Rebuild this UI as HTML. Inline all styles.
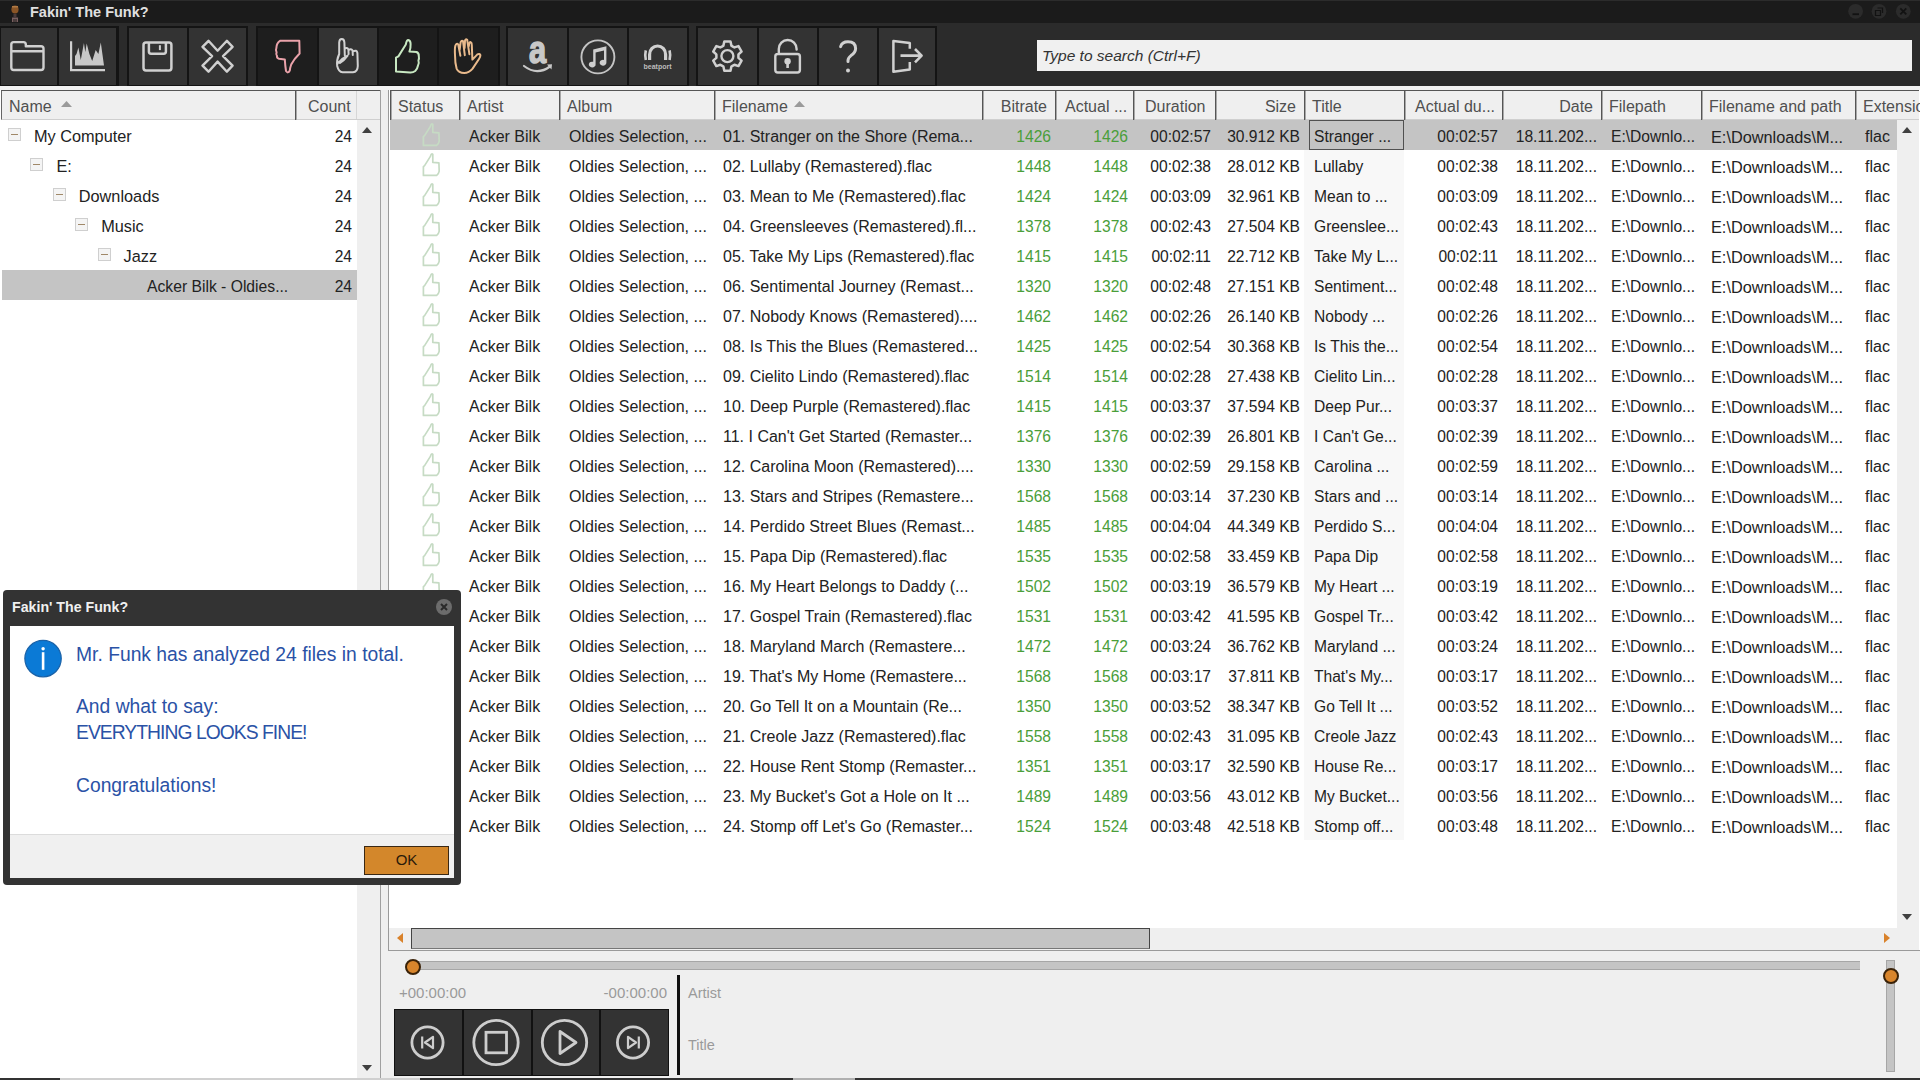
<!DOCTYPE html><html><head><meta charset="utf-8"><style>
*{margin:0;padding:0;box-sizing:border-box}
html,body{width:1920px;height:1080px;overflow:hidden;background:#efefef;font-family:"Liberation Sans",sans-serif;position:relative}
.a{position:absolute}
.t{position:absolute;white-space:pre;line-height:30px;font-size:16px;color:#222;padding-top:1.5px}
.h{position:absolute;white-space:pre;line-height:29px;font-size:16px;color:#505050;padding-top:1px}
.r{text-align:right}
.n{transform:scaleX(0.975);transform-origin:100% 50%}
.g{color:#4a9e3a}
</style></head><body><div class="a" style="left:0;top:0;width:1920px;height:26px;background:#1b1b1b"></div>
<div class="a" style="left:0;top:0;width:1920px;height:1px;background:#2c2c2c"></div>
<svg class="a" style="left:8px;top:3px" width="14" height="20" viewBox="0 0 14 20"><ellipse cx="7" cy="6.5" rx="3.6" ry="4" fill="#8a5526"/><rect x="4" y="3" width="6" height="1.5" fill="#b07a45"/><rect x="5.5" y="11" width="3" height="3" fill="#4a3a3a"/><path d="M4 14.5h6v4.5h-1.5v-3h-1v3h-1v-3h-1v3h-1.5z" fill="#7a6060"/></svg>
<div class="a" style="left:30px;top:3px;font-size:14.5px;font-weight:bold;color:#e0e0e0;white-space:pre;line-height:18px">Fakin' The Funk?</div>
<svg class="a" style="left:1840px;top:0" width="80" height="24" viewBox="1840 0 80 24"><circle cx="1855.6" cy="11.3" r="7.4" fill="#2b2b2b"/><circle cx="1879" cy="11.3" r="7.4" fill="#2b2b2b"/><circle cx="1903.3" cy="11.3" r="7.4" fill="#2b2b2b"/><path d="M1852.5 14.2h6.5" stroke="#121212" stroke-width="1.8"/><path d="M1875.5 10.5h5v5h-5z M1877.5 8h5v5" fill="none" stroke="#121212" stroke-width="1.2"/><path d="M1900.3 8.3l6 6M1906.3 8.3l-6 6" stroke="#121212" stroke-width="1.8"/></svg>
<div class="a" style="left:0;top:23px;width:1920px;height:63px;background:#2b2b2b"></div>
<div class="a" style="left:0px;top:26px;width:119px;height:60px;background:#141414"></div>
<div class="a" style="left:127px;top:26px;width:121px;height:60px;background:#141414"></div>
<div class="a" style="left:256px;top:26px;width:244px;height:60px;background:#141414"></div>
<div class="a" style="left:506px;top:26px;width:183px;height:60px;background:#141414"></div>
<div class="a" style="left:696px;top:26px;width:241px;height:60px;background:#141414"></div>
<div class="a" style="left:1px;top:28px;width:56px;height:57px;background:#333"></div>
<div class="a" style="left:59px;top:28px;width:57px;height:57px;background:#333"></div>
<div class="a" style="left:129px;top:28px;width:58px;height:57px;background:#333"></div>
<div class="a" style="left:189px;top:28px;width:57px;height:57px;background:#333"></div>
<div class="a" style="left:258px;top:28px;width:59px;height:57px;background:#1e1e1e"></div>
<div class="a" style="left:319px;top:28px;width:58px;height:57px;background:#333"></div>
<div class="a" style="left:379px;top:28px;width:58px;height:57px;background:#1e1e1e"></div>
<div class="a" style="left:439px;top:28px;width:59px;height:57px;background:#1e1e1e"></div>
<div class="a" style="left:508px;top:28px;width:59px;height:57px;background:#333"></div>
<div class="a" style="left:569px;top:28px;width:58px;height:57px;background:#333"></div>
<div class="a" style="left:629px;top:28px;width:58px;height:57px;background:#333"></div>
<div class="a" style="left:698px;top:28px;width:59px;height:57px;background:#333"></div>
<div class="a" style="left:759px;top:28px;width:58px;height:57px;background:#333"></div>
<div class="a" style="left:819px;top:28px;width:58px;height:57px;background:#333"></div>
<div class="a" style="left:879px;top:28px;width:56px;height:57px;background:#333"></div>
<svg class="a" style="left:0;top:0" width="960" height="90" viewBox="0 0 960 90"><path fill="none" stroke="#d0d0d0" stroke-width="2.4" stroke-linejoin="round" d="M11.3 44.5 Q11.3 42.1 13.7 42.1 L23.5 42.1 Q25.8 42.1 25.8 44.5 L25.8 46.2 L41 46.2 Q43.5 46.2 43.5 48.6 L43.5 67.6 Q43.5 70 41 70 L13.7 70 Q11.3 70 11.3 67.6 Z M11.3 51.3 H43.5"/><path fill="none" stroke="#d0d0d0" stroke-width="2.2" d="M71.1 41.3 V70.1 H105"/><path fill="#c8c8c8" d="M75 65.6 L75 56 L76.5 54 L78.4 47.5 L80.8 60 L83.9 43 L85.3 52 L86.7 43.4 L89.4 54 L92.2 61 L95.7 50 L98.4 54 L100.8 42.6 L102.4 54 L104 65.6 Z"/><path fill="none" stroke="#d0d0d0" stroke-width="2.5" stroke-linejoin="round" d="M146 42.5 L169 42.5 Q171.4 42.5 171.4 45 L171.4 68 Q171.4 70.4 169 70.4 L146 70.4 Q143.5 70.4 143.5 68 L143.5 45 Q143.5 42.5 146 42.5 Z M148.9 42.5 V51.5 Q148.9 53.7 151 53.7 H163.8 Q165.9 53.7 165.9 51.5 V42.5"/><path stroke="#d0d0d0" stroke-width="2" d="M159.9 45.2 V50.1"/><path fill="none" stroke="#d0d0d0" stroke-width="2.4" stroke-linejoin="round" d="M208.5 40.8 L217.6 50.7 L226.9 40.8 L232.6 46.8 L223 56.1 L232.6 65.7 L226.9 71.7 L217.6 61.6 L208.5 71.7 L202.5 65.7 L212.1 56.1 L202.5 46.8 Z"/><path fill="none" stroke="#eaa2aa" stroke-width="2" stroke-linejoin="round" stroke-linecap="round" d="M280 40.8 L299.3 40.8 L299.6 53.5 Q294 59 291.2 64.5 Q290 68 289.8 70.5 Q288 74 286 71 Q285.2 66 284.8 59.4 L279 58.8 Q276.6 58 277 56 Q275.6 54.5 276.6 52.5 Q275.4 50 276.4 47.8 Q276.5 43 280 40.8 Z"/><path fill="none" stroke="#d2d2d2" stroke-width="2" stroke-linejoin="round" stroke-linecap="round" d="M339.2 54 L339.2 42.5 Q339.4 39 341.8 39 Q344.2 39 344.4 42.5 L344.8 55.5 M344.6 49 Q347 46.8 348.4 49.5 L348.6 54 M348.6 50 Q351 48 352.6 50.6 L352.8 55 M352.8 51.5 Q356.8 49.2 357.4 53 L357.8 66 Q357.6 72 353 72.2 L342.5 72.2 Q338.6 72 337.2 66 Q336.4 60 339.2 54 M338.2 63 Q342 58 347.6 55.6 Q344 60.5 340 63"/><path fill="none" stroke="#c8e8c2" stroke-width="2" stroke-linejoin="round" stroke-linecap="round" d="M396 71.6 L396 57.6 L398.4 56.4 L405.8 44.5 Q406.6 40 408.2 40 Q410.6 40.4 410.6 44 Q410.8 48 409.4 51.6 L416.6 52 Q419 53.2 418.8 56 Q419.4 59 418.4 60.5 Q419.4 63 418 65.5 Q417.4 69 415.2 71 Q413 72.6 410 72.4 Z"/><path fill="none" stroke="#e9ba8c" stroke-width="2" stroke-linejoin="round" stroke-linecap="round" d="M455 55 Q454.6 48 455.4 45.6 Q456.6 42.8 458.2 44.4 L460.4 55.8 M459.6 50 L460.6 42.4 Q461.6 40 463 41 L464.8 55.2 M464.6 48 L465 40.8 Q465.6 38.6 467.2 39.8 L469.4 54.2 M468.8 46 Q469.4 41.6 470.6 42.2 Q472 43 471.8 45 L472.4 59.6 L477.4 54.4 Q479.6 53.2 480.4 55.2 Q480.4 57 479 59 L472.6 68.6 Q469 73 464.2 73 Q458.6 73 456.6 68.6 Q455 63 455 55"/><text x="0" y="0" transform="translate(537.6 63.2) scale(1.1 1.36)" font-family="Liberation Sans" font-weight="bold" font-size="28" fill="#c8c8c8" stroke="#c8c8c8" stroke-width="1.1" text-anchor="middle">a</text><path fill="none" stroke="#c8c8c8" stroke-width="2.2" stroke-linecap="round" d="M524 66 Q537 76 550 66.5"/><path fill="#c8c8c8" d="M547 64.4 L552 64.2 L551.5 69.6 Z"/><circle cx="597.9" cy="56.9" r="16.5" fill="none" stroke="#c4c4c4" stroke-width="1.9"/><path fill="#cfcfcf" d="M593.2 49.6 L606.4 46.2 L606.4 62.6 A3.4 2.9 0 1 1 604 60 L604 50.6 L595.6 52.6 L595.6 64.4 A3.4 2.9 0 1 1 593.2 61.8 Z"/><path fill="none" stroke="#cfcfcf" stroke-width="3.2" d="M649.6 60 V54.4 A8 8.4 0 0 1 665.6 54.4 V60"/><path fill="none" stroke="#cfcfcf" stroke-width="2.6" d="M645.8 50.4 Q644.6 55.2 645.8 60 M669.6 50.4 Q670.8 55.2 669.6 60"/><text x="657.5" y="69.2" font-family="Liberation Sans" font-size="8" font-weight="bold" fill="#bdbdbd" text-anchor="middle" textLength="28" lengthAdjust="spacingAndGlyphs">beatport</text><polygon points="721.90,46.57 723.39,45.64 724.30,41.53 730.50,41.53 731.41,45.64 732.90,46.57 734.45,47.40 738.47,46.13 741.57,51.50 738.46,54.35 738.40,56.10 738.46,57.85 741.57,60.70 738.47,66.07 734.45,64.80 732.90,65.63 731.41,66.56 730.50,70.67 724.30,70.67 723.39,66.56 721.90,65.63 720.35,64.80 716.33,66.07 713.23,60.70 716.34,57.85 716.40,56.10 716.34,54.35 713.23,51.50 716.33,46.13 720.35,47.40" fill="none" stroke="#d0d0d0" stroke-width="2.5" stroke-linejoin="round"/><circle cx="727.4" cy="56.1" r="6" fill="none" stroke="#d0d0d0" stroke-width="2.4"/><path fill="none" stroke="#d0d0d0" stroke-width="2.4" stroke-linejoin="round" stroke-linecap="round" d="M778.8 54 V48.9 A8.9 8.9 0 0 1 796.6 48.9 V49.6 M777.8 54 H797.4 Q799.9 54 799.9 56.5 V70 Q799.9 72.5 797.4 72.5 H777.8 Q775.3 72.5 775.3 70 V56.5 Q775.3 54 777.8 54 Z"/><circle cx="787.6" cy="61.3" r="3.2" fill="#d0d0d0"/><rect x="786.3" y="61.5" width="2.6" height="6.5" fill="#d0d0d0"/><path fill="none" stroke="#d0d0d0" stroke-width="3" stroke-linecap="round" stroke-linejoin="round" d="M840.6 46.6 Q842 41.8 848 41.8 Q855.6 41.8 855.6 48.6 Q855.6 52.6 851 55.6 Q848 57.8 848 60.6 V61.6"/><circle cx="848" cy="70.4" r="2" fill="#d0d0d0"/><path fill="none" stroke="#d0d0d0" stroke-width="2.5" stroke-linejoin="round" d="M909.8 48.8 V43 L893.4 41 V71.7 L909.8 69.5 V61.9"/><path fill="none" stroke="#d0d0d0" stroke-width="2.6" stroke-linejoin="round" d="M900.5 55.6 H921 M915 49 L921.6 55.6 L915 62.4"/></svg>
<div class="a" style="left:1037px;top:40px;width:875px;height:31px;background:#f0f0f0"></div>
<div class="a" style="left:1042px;top:40px;line-height:31px;font-size:15.5px;font-style:italic;color:#333;white-space:pre">Type to search (Ctrl+F)</div>
<div class="a" style="left:0;top:86px;width:1920px;height:4px;background:#f2f2f2"></div>
<div class="a" style="left:0;top:90px;width:380px;height:988px;background:#fff"></div>
<div class="a" style="left:1px;top:90px;width:379px;height:30px;background:#efefef;border-top:1px solid #555;border-left:1px solid #666;border-bottom:1px solid #cfcfcf"></div>
<div class="a" style="left:295px;top:91px;width:1px;height:29px;background:#555"></div><div class="a" style="left:296px;top:91px;width:1px;height:29px;background:#a8a8a8"></div>
<div class="h" style="left:9px;top:91px">Name</div>
<svg class="a" style="left:60px;top:100px" width="13" height="8"><path d="M1 7 L6.5 1 L12 7Z" fill="#9a9a9a"/></svg>
<div class="h" style="left:308px;top:91px">Count</div>
<div class="a" style="left:357px;top:120px;width:23px;height:958px;background:#efefef"></div>
<div class="a" style="left:356px;top:91px;width:1px;height:28px;background:#d6d6d6"></div>
<svg class="a" style="left:361px;top:126px" width="12" height="8"><path d="M1 7 L6 1 L11 7Z" fill="#404040"/></svg>
<svg class="a" style="left:361px;top:1064px" width="12" height="8"><path d="M1 1 L6 7 L11 1Z" fill="#404040"/></svg>
<div class="a" style="left:8.0px;top:128px;width:13px;height:13px;border:1px solid #cfcfcf;background:#f4f4f4"></div>
<div class="a" style="left:11.0px;top:134px;width:7px;height:1px;background:#a08868"></div>
<div class="t" style="left:34.0px;top:119px;font-size:16.3px">My Computer</div>
<div class="t r n" style="left:300px;width:52px;top:120px">24</div>
<div class="a" style="left:30.4px;top:158px;width:13px;height:13px;border:1px solid #cfcfcf;background:#f4f4f4"></div>
<div class="a" style="left:33.4px;top:164px;width:7px;height:1px;background:#a08868"></div>
<div class="t" style="left:56.4px;top:149px;font-size:16.3px">E:</div>
<div class="t r n" style="left:300px;width:52px;top:150px">24</div>
<div class="a" style="left:52.8px;top:188px;width:13px;height:13px;border:1px solid #cfcfcf;background:#f4f4f4"></div>
<div class="a" style="left:55.8px;top:194px;width:7px;height:1px;background:#a08868"></div>
<div class="t" style="left:78.8px;top:179px;font-size:16.3px">Downloads</div>
<div class="t r n" style="left:300px;width:52px;top:180px">24</div>
<div class="a" style="left:75.2px;top:218px;width:13px;height:13px;border:1px solid #cfcfcf;background:#f4f4f4"></div>
<div class="a" style="left:78.2px;top:224px;width:7px;height:1px;background:#a08868"></div>
<div class="t" style="left:101.2px;top:209px;font-size:16.3px">Music</div>
<div class="t r n" style="left:300px;width:52px;top:210px">24</div>
<div class="a" style="left:97.6px;top:248px;width:13px;height:13px;border:1px solid #cfcfcf;background:#f4f4f4"></div>
<div class="a" style="left:100.6px;top:254px;width:7px;height:1px;background:#a08868"></div>
<div class="t" style="left:123.6px;top:239px;font-size:16.3px">Jazz</div>
<div class="t r n" style="left:300px;width:52px;top:240px">24</div>
<div class="a" style="left:2px;top:270px;width:355px;height:30px;background:#c4c4c4"></div>
<div class="t" style="left:147px;top:270px;font-size:15.7px">Acker Bilk - Oldies...</div>
<div class="t r n" style="left:300px;width:52px;top:270px">24</div>
<div class="a" style="left:380px;top:90px;width:8px;height:988px;background:#efefef;border-left:1px solid #a0a0a0"></div>
<div class="a" style="left:388px;top:90px;width:1532px;height:861px;background:#fff;border-left:1px solid #9a9a9a;border-bottom:1px solid #9a9a9a"></div>
<div class="a" style="left:390px;top:90px;width:1529px;height:30px;background:#efefef;border-top:1px solid #555;border-bottom:1px solid #cfcfcf"></div>
<div class="a" style="left:390px;top:91px;width:1px;height:29px;background:#555"></div><div class="a" style="left:391px;top:91px;width:1px;height:29px;background:#a8a8a8"></div>
<div class="a" style="left:459px;top:91px;width:1px;height:29px;background:#555"></div><div class="a" style="left:460px;top:91px;width:1px;height:29px;background:#a8a8a8"></div>
<div class="a" style="left:559px;top:91px;width:1px;height:29px;background:#555"></div><div class="a" style="left:560px;top:91px;width:1px;height:29px;background:#a8a8a8"></div>
<div class="a" style="left:714px;top:91px;width:1px;height:29px;background:#555"></div><div class="a" style="left:715px;top:91px;width:1px;height:29px;background:#a8a8a8"></div>
<div class="a" style="left:982px;top:91px;width:1px;height:29px;background:#555"></div><div class="a" style="left:983px;top:91px;width:1px;height:29px;background:#a8a8a8"></div>
<div class="a" style="left:1055px;top:91px;width:1px;height:29px;background:#555"></div><div class="a" style="left:1056px;top:91px;width:1px;height:29px;background:#a8a8a8"></div>
<div class="a" style="left:1133px;top:91px;width:1px;height:29px;background:#555"></div><div class="a" style="left:1134px;top:91px;width:1px;height:29px;background:#a8a8a8"></div>
<div class="a" style="left:1215px;top:91px;width:1px;height:29px;background:#555"></div><div class="a" style="left:1216px;top:91px;width:1px;height:29px;background:#a8a8a8"></div>
<div class="a" style="left:1304px;top:91px;width:1px;height:29px;background:#555"></div><div class="a" style="left:1305px;top:91px;width:1px;height:29px;background:#a8a8a8"></div>
<div class="a" style="left:1404px;top:91px;width:1px;height:29px;background:#555"></div><div class="a" style="left:1405px;top:91px;width:1px;height:29px;background:#a8a8a8"></div>
<div class="a" style="left:1502px;top:91px;width:1px;height:29px;background:#555"></div><div class="a" style="left:1503px;top:91px;width:1px;height:29px;background:#a8a8a8"></div>
<div class="a" style="left:1601px;top:91px;width:1px;height:29px;background:#555"></div><div class="a" style="left:1602px;top:91px;width:1px;height:29px;background:#a8a8a8"></div>
<div class="a" style="left:1701px;top:91px;width:1px;height:29px;background:#555"></div><div class="a" style="left:1702px;top:91px;width:1px;height:29px;background:#a8a8a8"></div>
<div class="a" style="left:1855px;top:91px;width:1px;height:29px;background:#555"></div><div class="a" style="left:1856px;top:91px;width:1px;height:29px;background:#a8a8a8"></div>
<div class="a" style="left:1304px;top:150px;width:100px;height:690px;background:#f8f8f8"></div>
<div class="h" style="left:398px;top:91px">Status</div>
<div class="h" style="left:467px;top:91px">Artist</div>
<div class="h" style="left:567px;top:91px">Album</div>
<div class="h" style="left:722px;top:91px">Filename</div>
<div class="h r" style="left:897px;width:150px;top:91px">Bitrate</div>
<div class="h" style="left:1065px;top:91px">Actual ...</div>
<div class="h" style="left:1145px;top:91px">Duration</div>
<div class="h r" style="left:1146px;width:150px;top:91px">Size</div>
<div class="h" style="left:1312px;top:91px">Title</div>
<div class="h" style="left:1415px;top:91px">Actual du...</div>
<div class="h r" style="left:1443px;width:150px;top:91px">Date</div>
<div class="h" style="left:1609px;top:91px">Filepath</div>
<div class="h" style="left:1709px;top:91px">Filename and path</div>
<div class="h" style="left:1863px;top:91px">Extensio</div>
<svg class="a" style="left:793px;top:100px" width="13" height="8"><path d="M1 7 L6.5 1 L12 7Z" fill="#9a9a9a"/></svg>
<div class="a" style="left:390px;top:120px;width:1507px;height:30px;background:#c4c4c4"></div>
<div class="a" style="left:1309px;top:120px;width:95px;height:30px;border:1px solid #505050"></div>
<svg class="a" style="left:421px;top:122px" width="20" height="26" viewBox="0 0 20 26"><path fill="none" stroke="#c6dbc4" stroke-width="1.7" stroke-linejoin="round" d="M2.4 23.4 V14.6 L3.6 13.6 L9.4 4.4 Q10.4 1 11.8 2.4 L11.8 10.4 L17.9 10.8 L18.2 19.2 Q17.6 22.4 15.6 23.4 Z"/></svg>
<div class="t" style="left:469px;top:120px">Acker Bilk</div>
<div class="t" style="left:569px;top:120px">Oldies Selection, ...</div>
<div class="t" style="left:723px;top:120px">01. Stranger on the Shore (Rema...</div>
<div class="t r g n" style="left:951px;width:100px;top:120px">1426</div>
<div class="t r g n" style="left:1028px;width:100px;top:120px">1426</div>
<div class="t r n" style="left:1110.5px;width:100px;top:120px">00:02:57</div>
<div class="t r n" style="left:1199.5px;width:100px;top:120px">30.912 KB</div>
<div class="t" style="left:1314px;top:120px;font-size:15.6px">Stranger ...</div>
<div class="t r n" style="left:1397.5px;width:100px;top:120px">00:02:57</div>
<div class="t r n" style="left:1497px;width:100px;top:120px">18.11.202...</div>
<div class="t" style="left:1611px;top:120px;font-size:15.6px">E:\Downlo...</div>
<div class="t" style="left:1711px;top:120px;font-size:16.3px">E:\Downloads\M...</div>
<div class="t" style="left:1865px;top:120px">flac</div>
<svg class="a" style="left:421px;top:152px" width="20" height="26" viewBox="0 0 20 26"><path fill="none" stroke="#c6dbc4" stroke-width="1.7" stroke-linejoin="round" d="M2.4 23.4 V14.6 L3.6 13.6 L9.4 4.4 Q10.4 1 11.8 2.4 L11.8 10.4 L17.9 10.8 L18.2 19.2 Q17.6 22.4 15.6 23.4 Z"/></svg>
<div class="t" style="left:469px;top:150px">Acker Bilk</div>
<div class="t" style="left:569px;top:150px">Oldies Selection, ...</div>
<div class="t" style="left:723px;top:150px">02. Lullaby (Remastered).flac</div>
<div class="t r g n" style="left:951px;width:100px;top:150px">1448</div>
<div class="t r g n" style="left:1028px;width:100px;top:150px">1448</div>
<div class="t r n" style="left:1110.5px;width:100px;top:150px">00:02:38</div>
<div class="t r n" style="left:1199.5px;width:100px;top:150px">28.012 KB</div>
<div class="t" style="left:1314px;top:150px;font-size:15.6px">Lullaby</div>
<div class="t r n" style="left:1397.5px;width:100px;top:150px">00:02:38</div>
<div class="t r n" style="left:1497px;width:100px;top:150px">18.11.202...</div>
<div class="t" style="left:1611px;top:150px;font-size:15.6px">E:\Downlo...</div>
<div class="t" style="left:1711px;top:150px;font-size:16.3px">E:\Downloads\M...</div>
<div class="t" style="left:1865px;top:150px">flac</div>
<svg class="a" style="left:421px;top:182px" width="20" height="26" viewBox="0 0 20 26"><path fill="none" stroke="#c6dbc4" stroke-width="1.7" stroke-linejoin="round" d="M2.4 23.4 V14.6 L3.6 13.6 L9.4 4.4 Q10.4 1 11.8 2.4 L11.8 10.4 L17.9 10.8 L18.2 19.2 Q17.6 22.4 15.6 23.4 Z"/></svg>
<div class="t" style="left:469px;top:180px">Acker Bilk</div>
<div class="t" style="left:569px;top:180px">Oldies Selection, ...</div>
<div class="t" style="left:723px;top:180px">03. Mean to Me (Remastered).flac</div>
<div class="t r g n" style="left:951px;width:100px;top:180px">1424</div>
<div class="t r g n" style="left:1028px;width:100px;top:180px">1424</div>
<div class="t r n" style="left:1110.5px;width:100px;top:180px">00:03:09</div>
<div class="t r n" style="left:1199.5px;width:100px;top:180px">32.961 KB</div>
<div class="t" style="left:1314px;top:180px;font-size:15.6px">Mean to ...</div>
<div class="t r n" style="left:1397.5px;width:100px;top:180px">00:03:09</div>
<div class="t r n" style="left:1497px;width:100px;top:180px">18.11.202...</div>
<div class="t" style="left:1611px;top:180px;font-size:15.6px">E:\Downlo...</div>
<div class="t" style="left:1711px;top:180px;font-size:16.3px">E:\Downloads\M...</div>
<div class="t" style="left:1865px;top:180px">flac</div>
<svg class="a" style="left:421px;top:212px" width="20" height="26" viewBox="0 0 20 26"><path fill="none" stroke="#c6dbc4" stroke-width="1.7" stroke-linejoin="round" d="M2.4 23.4 V14.6 L3.6 13.6 L9.4 4.4 Q10.4 1 11.8 2.4 L11.8 10.4 L17.9 10.8 L18.2 19.2 Q17.6 22.4 15.6 23.4 Z"/></svg>
<div class="t" style="left:469px;top:210px">Acker Bilk</div>
<div class="t" style="left:569px;top:210px">Oldies Selection, ...</div>
<div class="t" style="left:723px;top:210px">04. Greensleeves (Remastered).fl...</div>
<div class="t r g n" style="left:951px;width:100px;top:210px">1378</div>
<div class="t r g n" style="left:1028px;width:100px;top:210px">1378</div>
<div class="t r n" style="left:1110.5px;width:100px;top:210px">00:02:43</div>
<div class="t r n" style="left:1199.5px;width:100px;top:210px">27.504 KB</div>
<div class="t" style="left:1314px;top:210px;font-size:15.6px">Greenslee...</div>
<div class="t r n" style="left:1397.5px;width:100px;top:210px">00:02:43</div>
<div class="t r n" style="left:1497px;width:100px;top:210px">18.11.202...</div>
<div class="t" style="left:1611px;top:210px;font-size:15.6px">E:\Downlo...</div>
<div class="t" style="left:1711px;top:210px;font-size:16.3px">E:\Downloads\M...</div>
<div class="t" style="left:1865px;top:210px">flac</div>
<svg class="a" style="left:421px;top:242px" width="20" height="26" viewBox="0 0 20 26"><path fill="none" stroke="#c6dbc4" stroke-width="1.7" stroke-linejoin="round" d="M2.4 23.4 V14.6 L3.6 13.6 L9.4 4.4 Q10.4 1 11.8 2.4 L11.8 10.4 L17.9 10.8 L18.2 19.2 Q17.6 22.4 15.6 23.4 Z"/></svg>
<div class="t" style="left:469px;top:240px">Acker Bilk</div>
<div class="t" style="left:569px;top:240px">Oldies Selection, ...</div>
<div class="t" style="left:723px;top:240px">05. Take My Lips (Remastered).flac</div>
<div class="t r g n" style="left:951px;width:100px;top:240px">1415</div>
<div class="t r g n" style="left:1028px;width:100px;top:240px">1415</div>
<div class="t r n" style="left:1110.5px;width:100px;top:240px">00:02:11</div>
<div class="t r n" style="left:1199.5px;width:100px;top:240px">22.712 KB</div>
<div class="t" style="left:1314px;top:240px;font-size:15.6px">Take My L...</div>
<div class="t r n" style="left:1397.5px;width:100px;top:240px">00:02:11</div>
<div class="t r n" style="left:1497px;width:100px;top:240px">18.11.202...</div>
<div class="t" style="left:1611px;top:240px;font-size:15.6px">E:\Downlo...</div>
<div class="t" style="left:1711px;top:240px;font-size:16.3px">E:\Downloads\M...</div>
<div class="t" style="left:1865px;top:240px">flac</div>
<svg class="a" style="left:421px;top:272px" width="20" height="26" viewBox="0 0 20 26"><path fill="none" stroke="#c6dbc4" stroke-width="1.7" stroke-linejoin="round" d="M2.4 23.4 V14.6 L3.6 13.6 L9.4 4.4 Q10.4 1 11.8 2.4 L11.8 10.4 L17.9 10.8 L18.2 19.2 Q17.6 22.4 15.6 23.4 Z"/></svg>
<div class="t" style="left:469px;top:270px">Acker Bilk</div>
<div class="t" style="left:569px;top:270px">Oldies Selection, ...</div>
<div class="t" style="left:723px;top:270px">06. Sentimental Journey (Remast...</div>
<div class="t r g n" style="left:951px;width:100px;top:270px">1320</div>
<div class="t r g n" style="left:1028px;width:100px;top:270px">1320</div>
<div class="t r n" style="left:1110.5px;width:100px;top:270px">00:02:48</div>
<div class="t r n" style="left:1199.5px;width:100px;top:270px">27.151 KB</div>
<div class="t" style="left:1314px;top:270px;font-size:15.6px">Sentiment...</div>
<div class="t r n" style="left:1397.5px;width:100px;top:270px">00:02:48</div>
<div class="t r n" style="left:1497px;width:100px;top:270px">18.11.202...</div>
<div class="t" style="left:1611px;top:270px;font-size:15.6px">E:\Downlo...</div>
<div class="t" style="left:1711px;top:270px;font-size:16.3px">E:\Downloads\M...</div>
<div class="t" style="left:1865px;top:270px">flac</div>
<svg class="a" style="left:421px;top:302px" width="20" height="26" viewBox="0 0 20 26"><path fill="none" stroke="#c6dbc4" stroke-width="1.7" stroke-linejoin="round" d="M2.4 23.4 V14.6 L3.6 13.6 L9.4 4.4 Q10.4 1 11.8 2.4 L11.8 10.4 L17.9 10.8 L18.2 19.2 Q17.6 22.4 15.6 23.4 Z"/></svg>
<div class="t" style="left:469px;top:300px">Acker Bilk</div>
<div class="t" style="left:569px;top:300px">Oldies Selection, ...</div>
<div class="t" style="left:723px;top:300px">07. Nobody Knows (Remastered)....</div>
<div class="t r g n" style="left:951px;width:100px;top:300px">1462</div>
<div class="t r g n" style="left:1028px;width:100px;top:300px">1462</div>
<div class="t r n" style="left:1110.5px;width:100px;top:300px">00:02:26</div>
<div class="t r n" style="left:1199.5px;width:100px;top:300px">26.140 KB</div>
<div class="t" style="left:1314px;top:300px;font-size:15.6px">Nobody ...</div>
<div class="t r n" style="left:1397.5px;width:100px;top:300px">00:02:26</div>
<div class="t r n" style="left:1497px;width:100px;top:300px">18.11.202...</div>
<div class="t" style="left:1611px;top:300px;font-size:15.6px">E:\Downlo...</div>
<div class="t" style="left:1711px;top:300px;font-size:16.3px">E:\Downloads\M...</div>
<div class="t" style="left:1865px;top:300px">flac</div>
<svg class="a" style="left:421px;top:332px" width="20" height="26" viewBox="0 0 20 26"><path fill="none" stroke="#c6dbc4" stroke-width="1.7" stroke-linejoin="round" d="M2.4 23.4 V14.6 L3.6 13.6 L9.4 4.4 Q10.4 1 11.8 2.4 L11.8 10.4 L17.9 10.8 L18.2 19.2 Q17.6 22.4 15.6 23.4 Z"/></svg>
<div class="t" style="left:469px;top:330px">Acker Bilk</div>
<div class="t" style="left:569px;top:330px">Oldies Selection, ...</div>
<div class="t" style="left:723px;top:330px">08. Is This the Blues (Remastered...</div>
<div class="t r g n" style="left:951px;width:100px;top:330px">1425</div>
<div class="t r g n" style="left:1028px;width:100px;top:330px">1425</div>
<div class="t r n" style="left:1110.5px;width:100px;top:330px">00:02:54</div>
<div class="t r n" style="left:1199.5px;width:100px;top:330px">30.368 KB</div>
<div class="t" style="left:1314px;top:330px;font-size:15.6px">Is This the...</div>
<div class="t r n" style="left:1397.5px;width:100px;top:330px">00:02:54</div>
<div class="t r n" style="left:1497px;width:100px;top:330px">18.11.202...</div>
<div class="t" style="left:1611px;top:330px;font-size:15.6px">E:\Downlo...</div>
<div class="t" style="left:1711px;top:330px;font-size:16.3px">E:\Downloads\M...</div>
<div class="t" style="left:1865px;top:330px">flac</div>
<svg class="a" style="left:421px;top:362px" width="20" height="26" viewBox="0 0 20 26"><path fill="none" stroke="#c6dbc4" stroke-width="1.7" stroke-linejoin="round" d="M2.4 23.4 V14.6 L3.6 13.6 L9.4 4.4 Q10.4 1 11.8 2.4 L11.8 10.4 L17.9 10.8 L18.2 19.2 Q17.6 22.4 15.6 23.4 Z"/></svg>
<div class="t" style="left:469px;top:360px">Acker Bilk</div>
<div class="t" style="left:569px;top:360px">Oldies Selection, ...</div>
<div class="t" style="left:723px;top:360px">09. Cielito Lindo (Remastered).flac</div>
<div class="t r g n" style="left:951px;width:100px;top:360px">1514</div>
<div class="t r g n" style="left:1028px;width:100px;top:360px">1514</div>
<div class="t r n" style="left:1110.5px;width:100px;top:360px">00:02:28</div>
<div class="t r n" style="left:1199.5px;width:100px;top:360px">27.438 KB</div>
<div class="t" style="left:1314px;top:360px;font-size:15.6px">Cielito Lin...</div>
<div class="t r n" style="left:1397.5px;width:100px;top:360px">00:02:28</div>
<div class="t r n" style="left:1497px;width:100px;top:360px">18.11.202...</div>
<div class="t" style="left:1611px;top:360px;font-size:15.6px">E:\Downlo...</div>
<div class="t" style="left:1711px;top:360px;font-size:16.3px">E:\Downloads\M...</div>
<div class="t" style="left:1865px;top:360px">flac</div>
<svg class="a" style="left:421px;top:392px" width="20" height="26" viewBox="0 0 20 26"><path fill="none" stroke="#c6dbc4" stroke-width="1.7" stroke-linejoin="round" d="M2.4 23.4 V14.6 L3.6 13.6 L9.4 4.4 Q10.4 1 11.8 2.4 L11.8 10.4 L17.9 10.8 L18.2 19.2 Q17.6 22.4 15.6 23.4 Z"/></svg>
<div class="t" style="left:469px;top:390px">Acker Bilk</div>
<div class="t" style="left:569px;top:390px">Oldies Selection, ...</div>
<div class="t" style="left:723px;top:390px">10. Deep Purple (Remastered).flac</div>
<div class="t r g n" style="left:951px;width:100px;top:390px">1415</div>
<div class="t r g n" style="left:1028px;width:100px;top:390px">1415</div>
<div class="t r n" style="left:1110.5px;width:100px;top:390px">00:03:37</div>
<div class="t r n" style="left:1199.5px;width:100px;top:390px">37.594 KB</div>
<div class="t" style="left:1314px;top:390px;font-size:15.6px">Deep Pur...</div>
<div class="t r n" style="left:1397.5px;width:100px;top:390px">00:03:37</div>
<div class="t r n" style="left:1497px;width:100px;top:390px">18.11.202...</div>
<div class="t" style="left:1611px;top:390px;font-size:15.6px">E:\Downlo...</div>
<div class="t" style="left:1711px;top:390px;font-size:16.3px">E:\Downloads\M...</div>
<div class="t" style="left:1865px;top:390px">flac</div>
<svg class="a" style="left:421px;top:422px" width="20" height="26" viewBox="0 0 20 26"><path fill="none" stroke="#c6dbc4" stroke-width="1.7" stroke-linejoin="round" d="M2.4 23.4 V14.6 L3.6 13.6 L9.4 4.4 Q10.4 1 11.8 2.4 L11.8 10.4 L17.9 10.8 L18.2 19.2 Q17.6 22.4 15.6 23.4 Z"/></svg>
<div class="t" style="left:469px;top:420px">Acker Bilk</div>
<div class="t" style="left:569px;top:420px">Oldies Selection, ...</div>
<div class="t" style="left:723px;top:420px">11. I Can't Get Started (Remaster...</div>
<div class="t r g n" style="left:951px;width:100px;top:420px">1376</div>
<div class="t r g n" style="left:1028px;width:100px;top:420px">1376</div>
<div class="t r n" style="left:1110.5px;width:100px;top:420px">00:02:39</div>
<div class="t r n" style="left:1199.5px;width:100px;top:420px">26.801 KB</div>
<div class="t" style="left:1314px;top:420px;font-size:15.6px">I Can't Ge...</div>
<div class="t r n" style="left:1397.5px;width:100px;top:420px">00:02:39</div>
<div class="t r n" style="left:1497px;width:100px;top:420px">18.11.202...</div>
<div class="t" style="left:1611px;top:420px;font-size:15.6px">E:\Downlo...</div>
<div class="t" style="left:1711px;top:420px;font-size:16.3px">E:\Downloads\M...</div>
<div class="t" style="left:1865px;top:420px">flac</div>
<svg class="a" style="left:421px;top:452px" width="20" height="26" viewBox="0 0 20 26"><path fill="none" stroke="#c6dbc4" stroke-width="1.7" stroke-linejoin="round" d="M2.4 23.4 V14.6 L3.6 13.6 L9.4 4.4 Q10.4 1 11.8 2.4 L11.8 10.4 L17.9 10.8 L18.2 19.2 Q17.6 22.4 15.6 23.4 Z"/></svg>
<div class="t" style="left:469px;top:450px">Acker Bilk</div>
<div class="t" style="left:569px;top:450px">Oldies Selection, ...</div>
<div class="t" style="left:723px;top:450px">12. Carolina Moon (Remastered)....</div>
<div class="t r g n" style="left:951px;width:100px;top:450px">1330</div>
<div class="t r g n" style="left:1028px;width:100px;top:450px">1330</div>
<div class="t r n" style="left:1110.5px;width:100px;top:450px">00:02:59</div>
<div class="t r n" style="left:1199.5px;width:100px;top:450px">29.158 KB</div>
<div class="t" style="left:1314px;top:450px;font-size:15.6px">Carolina ...</div>
<div class="t r n" style="left:1397.5px;width:100px;top:450px">00:02:59</div>
<div class="t r n" style="left:1497px;width:100px;top:450px">18.11.202...</div>
<div class="t" style="left:1611px;top:450px;font-size:15.6px">E:\Downlo...</div>
<div class="t" style="left:1711px;top:450px;font-size:16.3px">E:\Downloads\M...</div>
<div class="t" style="left:1865px;top:450px">flac</div>
<svg class="a" style="left:421px;top:482px" width="20" height="26" viewBox="0 0 20 26"><path fill="none" stroke="#c6dbc4" stroke-width="1.7" stroke-linejoin="round" d="M2.4 23.4 V14.6 L3.6 13.6 L9.4 4.4 Q10.4 1 11.8 2.4 L11.8 10.4 L17.9 10.8 L18.2 19.2 Q17.6 22.4 15.6 23.4 Z"/></svg>
<div class="t" style="left:469px;top:480px">Acker Bilk</div>
<div class="t" style="left:569px;top:480px">Oldies Selection, ...</div>
<div class="t" style="left:723px;top:480px">13. Stars and Stripes (Remastere...</div>
<div class="t r g n" style="left:951px;width:100px;top:480px">1568</div>
<div class="t r g n" style="left:1028px;width:100px;top:480px">1568</div>
<div class="t r n" style="left:1110.5px;width:100px;top:480px">00:03:14</div>
<div class="t r n" style="left:1199.5px;width:100px;top:480px">37.230 KB</div>
<div class="t" style="left:1314px;top:480px;font-size:15.6px">Stars and ...</div>
<div class="t r n" style="left:1397.5px;width:100px;top:480px">00:03:14</div>
<div class="t r n" style="left:1497px;width:100px;top:480px">18.11.202...</div>
<div class="t" style="left:1611px;top:480px;font-size:15.6px">E:\Downlo...</div>
<div class="t" style="left:1711px;top:480px;font-size:16.3px">E:\Downloads\M...</div>
<div class="t" style="left:1865px;top:480px">flac</div>
<svg class="a" style="left:421px;top:512px" width="20" height="26" viewBox="0 0 20 26"><path fill="none" stroke="#c6dbc4" stroke-width="1.7" stroke-linejoin="round" d="M2.4 23.4 V14.6 L3.6 13.6 L9.4 4.4 Q10.4 1 11.8 2.4 L11.8 10.4 L17.9 10.8 L18.2 19.2 Q17.6 22.4 15.6 23.4 Z"/></svg>
<div class="t" style="left:469px;top:510px">Acker Bilk</div>
<div class="t" style="left:569px;top:510px">Oldies Selection, ...</div>
<div class="t" style="left:723px;top:510px">14. Perdido Street Blues (Remast...</div>
<div class="t r g n" style="left:951px;width:100px;top:510px">1485</div>
<div class="t r g n" style="left:1028px;width:100px;top:510px">1485</div>
<div class="t r n" style="left:1110.5px;width:100px;top:510px">00:04:04</div>
<div class="t r n" style="left:1199.5px;width:100px;top:510px">44.349 KB</div>
<div class="t" style="left:1314px;top:510px;font-size:15.6px">Perdido S...</div>
<div class="t r n" style="left:1397.5px;width:100px;top:510px">00:04:04</div>
<div class="t r n" style="left:1497px;width:100px;top:510px">18.11.202...</div>
<div class="t" style="left:1611px;top:510px;font-size:15.6px">E:\Downlo...</div>
<div class="t" style="left:1711px;top:510px;font-size:16.3px">E:\Downloads\M...</div>
<div class="t" style="left:1865px;top:510px">flac</div>
<svg class="a" style="left:421px;top:542px" width="20" height="26" viewBox="0 0 20 26"><path fill="none" stroke="#c6dbc4" stroke-width="1.7" stroke-linejoin="round" d="M2.4 23.4 V14.6 L3.6 13.6 L9.4 4.4 Q10.4 1 11.8 2.4 L11.8 10.4 L17.9 10.8 L18.2 19.2 Q17.6 22.4 15.6 23.4 Z"/></svg>
<div class="t" style="left:469px;top:540px">Acker Bilk</div>
<div class="t" style="left:569px;top:540px">Oldies Selection, ...</div>
<div class="t" style="left:723px;top:540px">15. Papa Dip (Remastered).flac</div>
<div class="t r g n" style="left:951px;width:100px;top:540px">1535</div>
<div class="t r g n" style="left:1028px;width:100px;top:540px">1535</div>
<div class="t r n" style="left:1110.5px;width:100px;top:540px">00:02:58</div>
<div class="t r n" style="left:1199.5px;width:100px;top:540px">33.459 KB</div>
<div class="t" style="left:1314px;top:540px;font-size:15.6px">Papa Dip</div>
<div class="t r n" style="left:1397.5px;width:100px;top:540px">00:02:58</div>
<div class="t r n" style="left:1497px;width:100px;top:540px">18.11.202...</div>
<div class="t" style="left:1611px;top:540px;font-size:15.6px">E:\Downlo...</div>
<div class="t" style="left:1711px;top:540px;font-size:16.3px">E:\Downloads\M...</div>
<div class="t" style="left:1865px;top:540px">flac</div>
<svg class="a" style="left:421px;top:572px" width="20" height="26" viewBox="0 0 20 26"><path fill="none" stroke="#c6dbc4" stroke-width="1.7" stroke-linejoin="round" d="M2.4 23.4 V14.6 L3.6 13.6 L9.4 4.4 Q10.4 1 11.8 2.4 L11.8 10.4 L17.9 10.8 L18.2 19.2 Q17.6 22.4 15.6 23.4 Z"/></svg>
<div class="t" style="left:469px;top:570px">Acker Bilk</div>
<div class="t" style="left:569px;top:570px">Oldies Selection, ...</div>
<div class="t" style="left:723px;top:570px">16. My Heart Belongs to Daddy (...</div>
<div class="t r g n" style="left:951px;width:100px;top:570px">1502</div>
<div class="t r g n" style="left:1028px;width:100px;top:570px">1502</div>
<div class="t r n" style="left:1110.5px;width:100px;top:570px">00:03:19</div>
<div class="t r n" style="left:1199.5px;width:100px;top:570px">36.579 KB</div>
<div class="t" style="left:1314px;top:570px;font-size:15.6px">My Heart ...</div>
<div class="t r n" style="left:1397.5px;width:100px;top:570px">00:03:19</div>
<div class="t r n" style="left:1497px;width:100px;top:570px">18.11.202...</div>
<div class="t" style="left:1611px;top:570px;font-size:15.6px">E:\Downlo...</div>
<div class="t" style="left:1711px;top:570px;font-size:16.3px">E:\Downloads\M...</div>
<div class="t" style="left:1865px;top:570px">flac</div>
<svg class="a" style="left:421px;top:602px" width="20" height="26" viewBox="0 0 20 26"><path fill="none" stroke="#c6dbc4" stroke-width="1.7" stroke-linejoin="round" d="M2.4 23.4 V14.6 L3.6 13.6 L9.4 4.4 Q10.4 1 11.8 2.4 L11.8 10.4 L17.9 10.8 L18.2 19.2 Q17.6 22.4 15.6 23.4 Z"/></svg>
<div class="t" style="left:469px;top:600px">Acker Bilk</div>
<div class="t" style="left:569px;top:600px">Oldies Selection, ...</div>
<div class="t" style="left:723px;top:600px">17. Gospel Train (Remastered).flac</div>
<div class="t r g n" style="left:951px;width:100px;top:600px">1531</div>
<div class="t r g n" style="left:1028px;width:100px;top:600px">1531</div>
<div class="t r n" style="left:1110.5px;width:100px;top:600px">00:03:42</div>
<div class="t r n" style="left:1199.5px;width:100px;top:600px">41.595 KB</div>
<div class="t" style="left:1314px;top:600px;font-size:15.6px">Gospel Tr...</div>
<div class="t r n" style="left:1397.5px;width:100px;top:600px">00:03:42</div>
<div class="t r n" style="left:1497px;width:100px;top:600px">18.11.202...</div>
<div class="t" style="left:1611px;top:600px;font-size:15.6px">E:\Downlo...</div>
<div class="t" style="left:1711px;top:600px;font-size:16.3px">E:\Downloads\M...</div>
<div class="t" style="left:1865px;top:600px">flac</div>
<svg class="a" style="left:421px;top:632px" width="20" height="26" viewBox="0 0 20 26"><path fill="none" stroke="#c6dbc4" stroke-width="1.7" stroke-linejoin="round" d="M2.4 23.4 V14.6 L3.6 13.6 L9.4 4.4 Q10.4 1 11.8 2.4 L11.8 10.4 L17.9 10.8 L18.2 19.2 Q17.6 22.4 15.6 23.4 Z"/></svg>
<div class="t" style="left:469px;top:630px">Acker Bilk</div>
<div class="t" style="left:569px;top:630px">Oldies Selection, ...</div>
<div class="t" style="left:723px;top:630px">18. Maryland March (Remastere...</div>
<div class="t r g n" style="left:951px;width:100px;top:630px">1472</div>
<div class="t r g n" style="left:1028px;width:100px;top:630px">1472</div>
<div class="t r n" style="left:1110.5px;width:100px;top:630px">00:03:24</div>
<div class="t r n" style="left:1199.5px;width:100px;top:630px">36.762 KB</div>
<div class="t" style="left:1314px;top:630px;font-size:15.6px">Maryland ...</div>
<div class="t r n" style="left:1397.5px;width:100px;top:630px">00:03:24</div>
<div class="t r n" style="left:1497px;width:100px;top:630px">18.11.202...</div>
<div class="t" style="left:1611px;top:630px;font-size:15.6px">E:\Downlo...</div>
<div class="t" style="left:1711px;top:630px;font-size:16.3px">E:\Downloads\M...</div>
<div class="t" style="left:1865px;top:630px">flac</div>
<svg class="a" style="left:421px;top:662px" width="20" height="26" viewBox="0 0 20 26"><path fill="none" stroke="#c6dbc4" stroke-width="1.7" stroke-linejoin="round" d="M2.4 23.4 V14.6 L3.6 13.6 L9.4 4.4 Q10.4 1 11.8 2.4 L11.8 10.4 L17.9 10.8 L18.2 19.2 Q17.6 22.4 15.6 23.4 Z"/></svg>
<div class="t" style="left:469px;top:660px">Acker Bilk</div>
<div class="t" style="left:569px;top:660px">Oldies Selection, ...</div>
<div class="t" style="left:723px;top:660px">19. That's My Home (Remastere...</div>
<div class="t r g n" style="left:951px;width:100px;top:660px">1568</div>
<div class="t r g n" style="left:1028px;width:100px;top:660px">1568</div>
<div class="t r n" style="left:1110.5px;width:100px;top:660px">00:03:17</div>
<div class="t r n" style="left:1199.5px;width:100px;top:660px">37.811 KB</div>
<div class="t" style="left:1314px;top:660px;font-size:15.6px">That's My...</div>
<div class="t r n" style="left:1397.5px;width:100px;top:660px">00:03:17</div>
<div class="t r n" style="left:1497px;width:100px;top:660px">18.11.202...</div>
<div class="t" style="left:1611px;top:660px;font-size:15.6px">E:\Downlo...</div>
<div class="t" style="left:1711px;top:660px;font-size:16.3px">E:\Downloads\M...</div>
<div class="t" style="left:1865px;top:660px">flac</div>
<svg class="a" style="left:421px;top:692px" width="20" height="26" viewBox="0 0 20 26"><path fill="none" stroke="#c6dbc4" stroke-width="1.7" stroke-linejoin="round" d="M2.4 23.4 V14.6 L3.6 13.6 L9.4 4.4 Q10.4 1 11.8 2.4 L11.8 10.4 L17.9 10.8 L18.2 19.2 Q17.6 22.4 15.6 23.4 Z"/></svg>
<div class="t" style="left:469px;top:690px">Acker Bilk</div>
<div class="t" style="left:569px;top:690px">Oldies Selection, ...</div>
<div class="t" style="left:723px;top:690px">20. Go Tell It on a Mountain (Re...</div>
<div class="t r g n" style="left:951px;width:100px;top:690px">1350</div>
<div class="t r g n" style="left:1028px;width:100px;top:690px">1350</div>
<div class="t r n" style="left:1110.5px;width:100px;top:690px">00:03:52</div>
<div class="t r n" style="left:1199.5px;width:100px;top:690px">38.347 KB</div>
<div class="t" style="left:1314px;top:690px;font-size:15.6px">Go Tell It ...</div>
<div class="t r n" style="left:1397.5px;width:100px;top:690px">00:03:52</div>
<div class="t r n" style="left:1497px;width:100px;top:690px">18.11.202...</div>
<div class="t" style="left:1611px;top:690px;font-size:15.6px">E:\Downlo...</div>
<div class="t" style="left:1711px;top:690px;font-size:16.3px">E:\Downloads\M...</div>
<div class="t" style="left:1865px;top:690px">flac</div>
<svg class="a" style="left:421px;top:722px" width="20" height="26" viewBox="0 0 20 26"><path fill="none" stroke="#c6dbc4" stroke-width="1.7" stroke-linejoin="round" d="M2.4 23.4 V14.6 L3.6 13.6 L9.4 4.4 Q10.4 1 11.8 2.4 L11.8 10.4 L17.9 10.8 L18.2 19.2 Q17.6 22.4 15.6 23.4 Z"/></svg>
<div class="t" style="left:469px;top:720px">Acker Bilk</div>
<div class="t" style="left:569px;top:720px">Oldies Selection, ...</div>
<div class="t" style="left:723px;top:720px">21. Creole Jazz (Remastered).flac</div>
<div class="t r g n" style="left:951px;width:100px;top:720px">1558</div>
<div class="t r g n" style="left:1028px;width:100px;top:720px">1558</div>
<div class="t r n" style="left:1110.5px;width:100px;top:720px">00:02:43</div>
<div class="t r n" style="left:1199.5px;width:100px;top:720px">31.095 KB</div>
<div class="t" style="left:1314px;top:720px;font-size:15.6px">Creole Jazz</div>
<div class="t r n" style="left:1397.5px;width:100px;top:720px">00:02:43</div>
<div class="t r n" style="left:1497px;width:100px;top:720px">18.11.202...</div>
<div class="t" style="left:1611px;top:720px;font-size:15.6px">E:\Downlo...</div>
<div class="t" style="left:1711px;top:720px;font-size:16.3px">E:\Downloads\M...</div>
<div class="t" style="left:1865px;top:720px">flac</div>
<svg class="a" style="left:421px;top:752px" width="20" height="26" viewBox="0 0 20 26"><path fill="none" stroke="#c6dbc4" stroke-width="1.7" stroke-linejoin="round" d="M2.4 23.4 V14.6 L3.6 13.6 L9.4 4.4 Q10.4 1 11.8 2.4 L11.8 10.4 L17.9 10.8 L18.2 19.2 Q17.6 22.4 15.6 23.4 Z"/></svg>
<div class="t" style="left:469px;top:750px">Acker Bilk</div>
<div class="t" style="left:569px;top:750px">Oldies Selection, ...</div>
<div class="t" style="left:723px;top:750px">22. House Rent Stomp (Remaster...</div>
<div class="t r g n" style="left:951px;width:100px;top:750px">1351</div>
<div class="t r g n" style="left:1028px;width:100px;top:750px">1351</div>
<div class="t r n" style="left:1110.5px;width:100px;top:750px">00:03:17</div>
<div class="t r n" style="left:1199.5px;width:100px;top:750px">32.590 KB</div>
<div class="t" style="left:1314px;top:750px;font-size:15.6px">House Re...</div>
<div class="t r n" style="left:1397.5px;width:100px;top:750px">00:03:17</div>
<div class="t r n" style="left:1497px;width:100px;top:750px">18.11.202...</div>
<div class="t" style="left:1611px;top:750px;font-size:15.6px">E:\Downlo...</div>
<div class="t" style="left:1711px;top:750px;font-size:16.3px">E:\Downloads\M...</div>
<div class="t" style="left:1865px;top:750px">flac</div>
<svg class="a" style="left:421px;top:782px" width="20" height="26" viewBox="0 0 20 26"><path fill="none" stroke="#c6dbc4" stroke-width="1.7" stroke-linejoin="round" d="M2.4 23.4 V14.6 L3.6 13.6 L9.4 4.4 Q10.4 1 11.8 2.4 L11.8 10.4 L17.9 10.8 L18.2 19.2 Q17.6 22.4 15.6 23.4 Z"/></svg>
<div class="t" style="left:469px;top:780px">Acker Bilk</div>
<div class="t" style="left:569px;top:780px">Oldies Selection, ...</div>
<div class="t" style="left:723px;top:780px">23. My Bucket's Got a Hole on It ...</div>
<div class="t r g n" style="left:951px;width:100px;top:780px">1489</div>
<div class="t r g n" style="left:1028px;width:100px;top:780px">1489</div>
<div class="t r n" style="left:1110.5px;width:100px;top:780px">00:03:56</div>
<div class="t r n" style="left:1199.5px;width:100px;top:780px">43.012 KB</div>
<div class="t" style="left:1314px;top:780px;font-size:15.6px">My Bucket...</div>
<div class="t r n" style="left:1397.5px;width:100px;top:780px">00:03:56</div>
<div class="t r n" style="left:1497px;width:100px;top:780px">18.11.202...</div>
<div class="t" style="left:1611px;top:780px;font-size:15.6px">E:\Downlo...</div>
<div class="t" style="left:1711px;top:780px;font-size:16.3px">E:\Downloads\M...</div>
<div class="t" style="left:1865px;top:780px">flac</div>
<svg class="a" style="left:421px;top:812px" width="20" height="26" viewBox="0 0 20 26"><path fill="none" stroke="#c6dbc4" stroke-width="1.7" stroke-linejoin="round" d="M2.4 23.4 V14.6 L3.6 13.6 L9.4 4.4 Q10.4 1 11.8 2.4 L11.8 10.4 L17.9 10.8 L18.2 19.2 Q17.6 22.4 15.6 23.4 Z"/></svg>
<div class="t" style="left:469px;top:810px">Acker Bilk</div>
<div class="t" style="left:569px;top:810px">Oldies Selection, ...</div>
<div class="t" style="left:723px;top:810px">24. Stomp off Let's Go (Remaster...</div>
<div class="t r g n" style="left:951px;width:100px;top:810px">1524</div>
<div class="t r g n" style="left:1028px;width:100px;top:810px">1524</div>
<div class="t r n" style="left:1110.5px;width:100px;top:810px">00:03:48</div>
<div class="t r n" style="left:1199.5px;width:100px;top:810px">42.518 KB</div>
<div class="t" style="left:1314px;top:810px;font-size:15.6px">Stomp off...</div>
<div class="t r n" style="left:1397.5px;width:100px;top:810px">00:03:48</div>
<div class="t r n" style="left:1497px;width:100px;top:810px">18.11.202...</div>
<div class="t" style="left:1611px;top:810px;font-size:15.6px">E:\Downlo...</div>
<div class="t" style="left:1711px;top:810px;font-size:16.3px">E:\Downloads\M...</div>
<div class="t" style="left:1865px;top:810px">flac</div>
<div class="a" style="left:1897px;top:120px;width:22px;height:808px;background:#efefef"></div>
<svg class="a" style="left:1901px;top:126px" width="12" height="8"><path d="M1 7 L6 1 L11 7Z" fill="#404040"/></svg>
<svg class="a" style="left:1901px;top:913px" width="12" height="8"><path d="M1 1 L6 7 L11 1Z" fill="#404040"/></svg>
<div class="a" style="left:389px;top:928px;width:1530px;height:22px;background:#efefef"></div>
<svg class="a" style="left:396px;top:932px" width="8" height="12"><path d="M7 1 L1 6 L7 11Z" fill="#d9822b"/></svg>
<svg class="a" style="left:1883px;top:932px" width="8" height="12"><path d="M1 1 L7 6 L1 11Z" fill="#d9822b"/></svg>
<div class="a" style="left:411px;top:928px;width:739px;height:21px;background:#c4c4c4;border:1px solid #444;border-bottom-color:#777"></div>
<div class="a" style="left:412px;top:961px;width:1448px;height:9px;background:#c4c4c4;border-top:1px solid #a6a6a6;border-bottom:1px solid #a6a6a6"></div>
<div class="a" style="left:404.5px;top:958.5px;width:16px;height:16px;border-radius:50%;background:#d8852c;border:2px solid #3a2208"></div>
<div class="a" style="left:399px;top:980px;font-size:15px;line-height:26px;color:#9a9a9a;white-space:pre">+00:00:00</div>
<div class="a" style="left:567px;width:100px;text-align:right;top:980px;font-size:15px;line-height:26px;color:#9a9a9a;white-space:pre">-00:00:00</div>
<div class="a" style="left:394px;top:1009px;width:275px;height:67px;background:#111"></div>
<div class="a" style="left:395px;top:1010px;width:67px;height:65px;background:#333"></div>
<div class="a" style="left:464px;top:1010px;width:67px;height:65px;background:#333"></div>
<div class="a" style="left:533px;top:1010px;width:66px;height:65px;background:#333"></div>
<div class="a" style="left:601px;top:1010px;width:67px;height:65px;background:#333"></div>
<svg class="a" style="left:380px;top:1000px" width="300" height="80" viewBox="380 1000 300 80"><circle cx="427.5" cy="1042.5" r="15.6" fill="none" stroke="#cdcdcd" stroke-width="2.8"/><path fill="none" stroke="#cdcdcd" stroke-width="2.2" stroke-linejoin="round" d="M422.2 1036.5v12 M433 1036.8 L425 1042.5 L433 1048.2Z"/><circle cx="496" cy="1042.5" r="22.2" fill="none" stroke="#cdcdcd" stroke-width="2.8"/><rect x="486" y="1032.3" width="20.5" height="20.5" fill="none" stroke="#cdcdcd" stroke-width="2.8"/><circle cx="564.5" cy="1042.5" r="22.2" fill="none" stroke="#cdcdcd" stroke-width="2.8"/><path fill="none" stroke="#cdcdcd" stroke-width="2.8" stroke-linejoin="round" d="M560 1031.5 L576 1042.5 L560 1053.5Z"/><circle cx="633" cy="1042.5" r="15.6" fill="none" stroke="#cdcdcd" stroke-width="2.8"/><path fill="none" stroke="#cdcdcd" stroke-width="2.2" stroke-linejoin="round" d="M638.8 1036.5v12 M628 1036.8 L636 1042.5 L628 1048.2Z"/></svg>
<div class="a" style="left:677px;top:975px;width:3px;height:100px;background:#111"></div>
<div class="a" style="left:688px;top:981px;font-size:14.5px;line-height:24px;color:#9a9a9a;white-space:pre">Artist</div>
<div class="a" style="left:688px;top:1033px;font-size:14.5px;line-height:24px;color:#9a9a9a;white-space:pre">Title</div>
<div class="a" style="left:1886px;top:960px;width:9px;height:112px;background:#c4c4c4;border:1px solid #a6a6a6"></div>
<div class="a" style="left:1883px;top:968px;width:16px;height:16px;border-radius:50%;background:#d8852c;border:2px solid #3a2208"></div>
<div class="a" style="left:0;top:1078px;width:1920px;height:2px;background:#333"></div>
<div class="a" style="left:60px;top:1078px;width:360px;height:2px;background:#d0d0d0"></div>
<div class="a" style="left:793px;top:1078px;width:62px;height:2px;background:#b0b0b0"></div>
<div class="a" style="left:3px;top:590px;width:458px;height:295px;background:#333;border-radius:4px"></div>
<div class="a" style="left:12px;top:598px;font-size:14.2px;font-weight:bold;color:#f0f0f0;white-space:pre;line-height:18px">Fakin' The Funk?</div>
<div class="a" style="left:436px;top:599px;width:16px;height:16px;border-radius:50%;background:#6c6c6c"></div>
<svg class="a" style="left:436px;top:599px" width="16" height="16"><path d="M5 5L11 11M11 5L5 11" stroke="#2a2a2a" stroke-width="2"/></svg>
<div class="a" style="left:10px;top:626px;width:444px;height:209px;background:#fff"></div>
<div class="a" style="left:10px;top:834px;width:444px;height:44px;background:#f0f0f0;border-top:1px solid #dcdcdc"></div>
<div class="a" style="left:364px;top:846px;width:85px;height:29px;background:#d3872b;border:1.5px solid #3a2814;font-size:15px;line-height:25px;text-align:center;color:#2a1a0a">OK</div>
<svg class="a" style="left:23px;top:638px" width="40" height="42"><circle cx="20.05" cy="20.6" r="18.2" fill="#0b7ad6" stroke="#1a62a8" stroke-width="1.2"/><rect x="18.8" y="14.2" width="2.6" height="17.6" fill="#fff"/><circle cx="20.1" cy="10.8" r="1.7" fill="#fff"/></svg>
<div class="a" style="left:76px;top:641.5px;font-size:19.3px;line-height:26px;color:#2a52a6;white-space:pre;">Mr. Funk has analyzed 24 files in total.</div>
<div class="a" style="left:76px;top:693.9px;font-size:19.3px;line-height:26px;color:#2a52a6;white-space:pre;">And what to say:</div>
<div class="a" style="left:76px;top:720.0px;font-size:19.3px;line-height:26px;color:#2a52a6;white-space:pre;letter-spacing:-0.95px;">EVERYTHING LOOKS FINE!</div>
<div class="a" style="left:76px;top:772.5px;font-size:19.3px;line-height:26px;color:#2a52a6;white-space:pre;">Congratulations!</div></body></html>
